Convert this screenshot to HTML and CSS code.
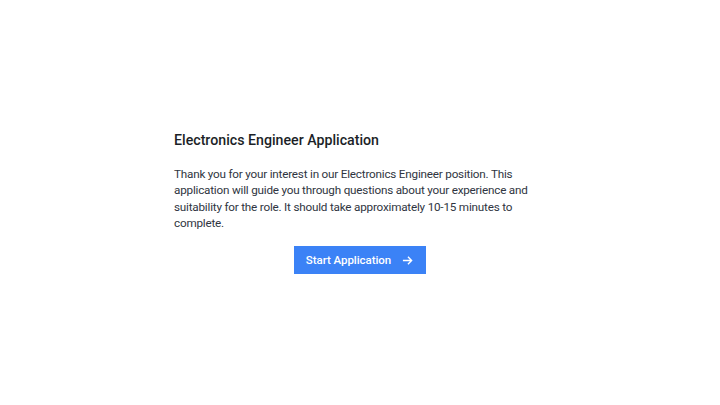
FILE: index.html
```html
<!DOCTYPE html>
<html lang="en">
<head>
<meta charset="utf-8">
<title>Electronics Engineer Application</title>
<link rel="stylesheet" href="styles.css">
</head>
<body>
<main class="page">
  <section class="intro">
    <h1 class="title">Electronics Engineer Application</h1>
    <p class="lead">Thank you for your interest in our Electronics Engineer position. This application will guide you through questions about your experience and suitability for the role. It should take approximately 10-15 minutes to complete.</p>
    <div class="actions">
      <button class="btn" type="button">
        <span>Start Application</span>
        <svg class="arrow" width="11" height="11" viewBox="0 0 12 12" aria-hidden="true"><path d="M1 6h9.5M6.5 2l4 4-4 4" fill="none" stroke="#fff" stroke-width="1.5"/></svg>
      </button>
    </div>
  </section>
</main>
</body>
</html>
```
FILE: styles.css
```css
html, body {
  margin: 0;
  padding: 0;
  background: #ffffff;
}
body {
  font-family: Roboto, "Noto Sans", "Liberation Sans", sans-serif;
  color: #2f3541;
}
.page {
  height: 405px;
  display: flex;
  align-items: center;
  justify-content: center;
}
.intro {
  width: 372px;
  display: flex;
  flex-direction: column;
}
.title {
  margin: 0 0 17px;
  font-size: 14.2px;
  line-height: 18px;
  font-weight: 500;
  color: #1b1f27;
}
.lead {
  margin: 0 0 15px;
  font-size: 11.7px;
  line-height: 16.3px;
  letter-spacing: -0.2px;
  color: #2f3541;
}
.actions {
  display: flex;
  justify-content: center;
}
.btn {
  display: flex;
  align-items: center;
  gap: 11px;
  height: 28px;
  padding: 0 13px 0 12px;
  border: 0;
  border-radius: 0;
  background: #3b82f6;
  color: #ffffff;
  font-family: inherit;
  font-size: 11.5px;
  letter-spacing: -0.05px;
  font-weight: 500;
}
.arrow {
  display: block;
}
```
